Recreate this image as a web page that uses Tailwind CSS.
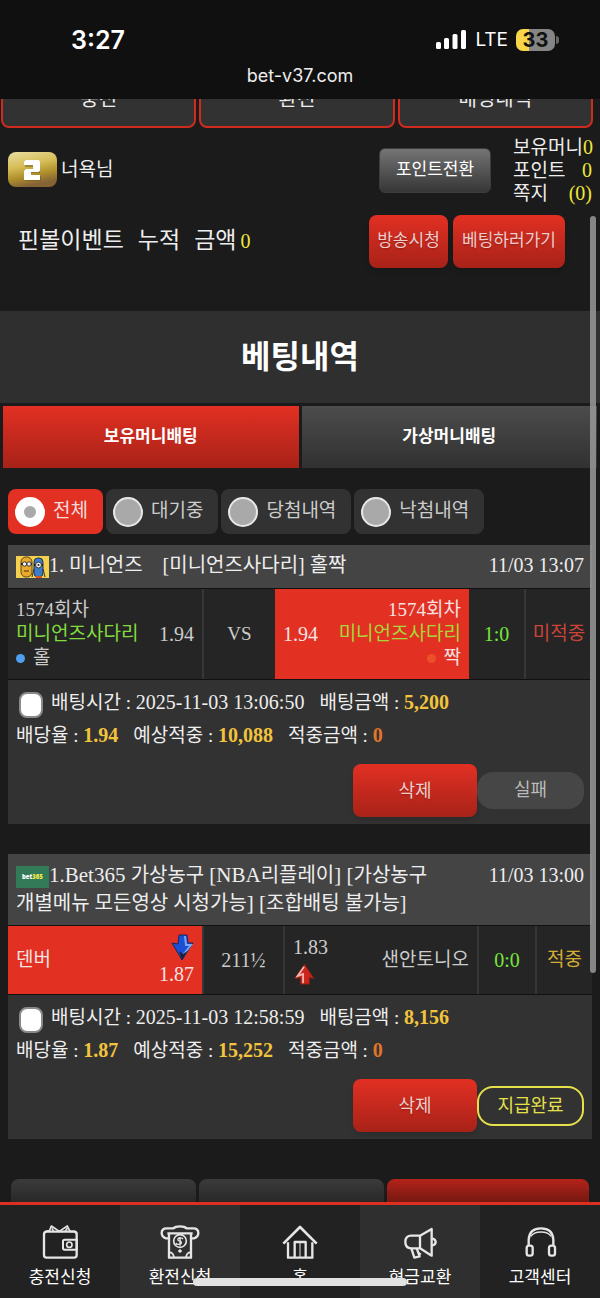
<!DOCTYPE html>
<html lang="ko">
<head>
	<meta charset="UTF-8">
	<meta name="viewport" content="width=device-width, initial-scale=1.0">
	<title>베팅내역</title>
	<script src="https://cdn.jsdelivr.net/npm/@tailwindcss/browser@4"></script>
</head>
<body class="bg-[#1b1b1b] text-[#eee] font-['Liberation_Serif','Noto_Sans_CJK_KR',serif]">
<div class="relative flex flex-col h-screen overflow-hidden">

	<!-- status bar -->
	<header class="h-[99px] shrink-0 bg-[#101010] text-white font-['Inter',sans-serif]">
		<div class="flex items-center justify-between h-16 pt-4 pl-[71px] pr-[41px]">
			<span class="text-[25px] leading-8 font-semibold">3:27</span>
			<div class="flex items-center gap-2">
				<svg class="w-[31px] h-5" viewBox="0 0 31 20" fill="#fff">
					<rect x="0" y="12" width="5" height="7" rx="1.5" />
					<rect x="8" y="8" width="5" height="11" rx="1.5" />
					<rect x="16.5" y="4" width="5" height="15" rx="1.5" />
					<rect x="25" y="0" width="5" height="19" rx="1.5" />
				</svg>
				<span class="text-[19px] leading-6">LTE</span>
				<div class="flex items-center gap-px">
					<span class="w-[39px] h-[22px] rounded-[7px] bg-linear-to-r from-[#f8d648] from-33% to-[#858585] to-33% text-[#111] text-[20px] leading-[22px] font-bold text-center">33</span>
					<span class="w-[3px] h-2 rounded-r-full bg-[#666]"></span>
				</div>
			</div>
		</div>
		<p class="text-center text-[18px] leading-6 text-[#eee]">bet-v37.com</p>
	</header>

	<main class="flex-1 min-h-0 overflow-hidden">
		<div class="flex items-end gap-[3px] h-[29px] overflow-hidden pl-px pr-[7px] text-[20px]">
			<button type="button" class="flex-1 h-[58px] shrink-0 rounded-lg border-2 border-[#cf2b1f] bg-[#323232]">충전</button>
			<button type="button" class="flex-1 h-[58px] shrink-0 rounded-lg border-2 border-[#cf2b1f] bg-[#323232]">환전</button>
			<button type="button" class="flex-1 h-[58px] shrink-0 rounded-lg border-2 border-[#cf2b1f] bg-[#323232]">배팅내역</button>
		</div>

		<!-- user info -->
		<section class="flex items-center h-[84px] pl-2 pr-2 text-[19px]">
			<svg class="w-[49px] h-[36px] shrink-0" viewBox="0 0 49 36">
				<defs>
					<linearGradient id="gold" x1="0" y1="0" x2="0.3" y2="1">
						<stop offset="0" stop-color="#e9dda4" />
						<stop offset="0.45" stop-color="#d6bd55" />
						<stop offset="0.75" stop-color="#ad8f2c" />
						<stop offset="1" stop-color="#856335" />
					</linearGradient>
				</defs>
				<rect width="49" height="35" rx="8" fill="url(#gold)" />
				<path d="M18 10h14v11h-9v3h10v5H17V18h9v-3h-9v-4z" fill="#6f571a" opacity="0.5" />
				<path d="M18 8h13l1 2v9l-2 1h-7v3h9v5H16v-9l2-2h7v-4h-9v-3z" fill="#fff" />
			</svg>
			<span class="pl-1">너욕님</span>
			<button type="button" class="ml-auto mr-[22px] w-[112px] h-[45px] rounded-md border border-[#3c3c3c] bg-linear-to-b from-[#757575] to-[#373737] text-[17px] text-white">포인트전환</button>
			<dl class="w-[79px] leading-[23px] whitespace-nowrap">
				<div class="flex justify-between"><dt>보유머니</dt><dd class="text-[20px] text-[#efe83c]">0</dd></div>
				<div class="flex justify-between"><dt>포인트</dt><dd class="text-[20px] text-[#efe83c]">0</dd></div>
				<div class="flex justify-between"><dt>쪽지</dt><dd class="text-[20px] text-[#efe83c]">(0)</dd></div>
			</dl>
		</section>

		<section class="flex items-center h-[99px] pl-[18px] pr-[35px] pb-[41px]">
			<p class="flex items-baseline gap-[14px] text-[23px] leading-8"><span>핀볼이벤트</span><span>누적</span><span>금액<span class="pl-1 text-[20px] text-[#efe83c]">0</span></span></p>
			<button type="button" class="ml-auto w-[79px] h-[53px] rounded-lg bg-linear-to-b from-[#e23023] to-[#a82218] text-[17px] text-[#eccfcd] shadow-md text-shadow-sm">방송시청</button>
			<button type="button" class="ml-[5px] w-[112px] h-[53px] rounded-lg bg-linear-to-b from-[#e23023] to-[#a82218] text-[17px] text-[#eccfcd] shadow-md text-shadow-sm">베팅하러가기</button>
		</section>

		<h1 class="flex items-center justify-center h-[92px] text-[32px] font-bold text-white bg-[#2f2f2f]">베팅내역</h1>

		<div class="flex gap-[3px] pt-[3px] px-[3px] text-[17px] font-bold text-white">
			<button type="button" class="flex-1 h-[62px] bg-linear-to-b from-[#e23023] to-[#a82218]">보유머니배팅</button>
			<button type="button" class="flex-1 h-[62px] bg-linear-to-b from-[#4c4c4c] to-[#313131]">가상머니배팅</button>
		</div>

		<!-- filters -->
		<div class="flex gap-[3px] pt-[21px] pl-2 text-[19px] text-[#ccc]">
			<label class="flex items-center gap-2 h-[45px] pl-[7px] pr-[15px] rounded-lg bg-[#e23023] text-[#f3dddb]">
				<input type="radio" name="filter" checked class="appearance-none w-[30px] h-[30px] rounded-full border-[9px] border-white bg-[#a9a9a9]">전체
			</label>
			<label class="flex items-center gap-2 h-[45px] pl-[7px] pr-[15px] rounded-lg bg-[#323232]">
				<input type="radio" name="filter" class="appearance-none w-[30px] h-[30px] rounded-full border-2 border-[#e8e8e8] bg-[#a9a9a9]">대기중
			</label>
			<label class="flex items-center gap-2 h-[45px] pl-[7px] pr-[15px] rounded-lg bg-[#323232]">
				<input type="radio" name="filter" class="appearance-none w-[30px] h-[30px] rounded-full border-2 border-[#e8e8e8] bg-[#a9a9a9]">당첨내역
			</label>
			<label class="flex items-center gap-2 h-[45px] pl-[7px] pr-[15px] rounded-lg bg-[#323232]">
				<input type="radio" name="filter" class="appearance-none w-[30px] h-[30px] rounded-full border-2 border-[#e8e8e8] bg-[#a9a9a9]">낙첨내역
			</label>
		</div>

		<!-- bet 1 -->
		<article class="mt-[11px] mx-2">
			<div class="flex justify-between bg-[#444] px-2 pt-[6px] pb-[9px] text-[20px] leading-7">
				<h2><svg class="inline-block w-[33px] h-[22px] align-[-6px]" viewBox="0 0 33 22">
					<rect width="33" height="22" fill="#f4d04e" />
					<rect x="5" y="1" width="11" height="20" rx="5" fill="#eaa928" stroke="#5b4a22" />
					<rect x="18" y="2" width="9" height="19" rx="4" fill="#3d7cc9" stroke="#26354d" />
					<path d="M5 8h11M18 9h9" stroke="#222" stroke-width="2" />
					<circle cx="8.5" cy="8" r="2.2" fill="#eee" stroke="#333" />
					<circle cx="13" cy="8" r="2.2" fill="#eee" stroke="#333" />
					<circle cx="22.5" cy="9" r="3" fill="#eee" stroke="#333" />
					<circle cx="22.5" cy="9" r="1" fill="#222" />
					<path d="M8 15h5M18 13l-2 8M27 13l2 8" stroke="#333" />
					<path d="M20 21h6" stroke="#d5542b" stroke-width="2" />
				</svg>1. 미니언즈 &nbsp; &nbsp;[미니언즈사다리] 홀짝</h2>
				<time class="shrink-0">11/03 13:07</time>
			</div>
			<div class="grid grid-cols-[1fr_73px_1fr_55px_68px] border-y border-[#111] bg-[#252525] text-[19px] leading-6 text-[#ccc]">
				<div class="flex items-center justify-between px-2 py-[9px]">
					<div><p>1574회차</p><p class="text-[#83dc3d]">미니언즈사다리</p><p class="flex items-center gap-2"><i class="w-[9px] h-[9px] rounded-full bg-[#4f9fee]"></i>홀</p></div>
					<span class="text-[20px]">1.94</span>
				</div>
				<div class="flex items-center justify-center border-l-2 border-[#363636]">VS</div>
				<div class="flex items-center justify-between px-2 py-[9px] bg-[#e23023] text-[#f5e3e1]">
					<span class="text-[20px]">1.94</span>
					<div class="text-right"><p>1574회차</p><p class="text-[#a6d838]">미니언즈사다리</p><p class="flex items-center justify-end gap-2"><i class="w-[9px] h-[9px] rounded-full bg-[#ec5028]"></i>짝</p></div>
				</div>
				<div class="flex items-center justify-center text-[20px] text-[#74e83b]">1:0</div>
				<div class="flex items-center justify-center border-l-2 border-[#363636] text-[#cc4438]">미적중</div>
			</div>
			<div class="bg-[#323232] px-2 pt-[6px] pb-[7px] text-[19px] leading-8">
				<p class="flex items-center"><input type="checkbox" aria-label="배팅 선택" class="appearance-none w-6 h-[26px] ml-[3px] mr-2 mt-1 rounded-lg border-2 border-[#8a8a8a] bg-white"><span class="mr-[15px]">배팅시간 : <span class="text-[20px]">2025-11-03 13:06:50</span></span><span>배팅금액 : <b class="text-[20px] text-[#f2c33c]">5,200</b></span></p>
				<p class="flex"><span class="mr-[15px]">배당율 : <b class="text-[20px] text-[#f2c33c]">1.94</b></span><span class="mr-[15px]">예상적중 : <b class="text-[20px] text-[#f2c33c]">10,088</b></span><span>적중금액 : <b class="text-[20px] text-[#e0762c]">0</b></span></p>
				<div class="flex items-center justify-end mt-3">
					<button type="button" class="w-[124px] h-[53px] rounded-lg bg-linear-to-b from-[#e23023] to-[#a82218] text-[18px] text-[#eccfcd] shadow-md text-shadow-sm">삭제</button>
					<span class="w-[107px] h-[37px] rounded-2xl bg-[#464646] text-[18px] leading-[37px] text-[#bbb] text-center">실패</span>
				</div>
			</div>
		</article>

		<!-- bet 2 -->
		<article class="mt-[30px] mx-2">
			<div class="flex justify-between bg-[#444] px-2 pt-[7px] pb-2 text-[20px] leading-7">
				<h2><svg class="inline-block w-[33px] h-[22px] align-[-6px] font-['Open_Sans',sans-serif]" viewBox="0 0 33 22">
					<rect width="33" height="22" fill="#337a58" />
					<text x="6" y="13" font-size="6" font-weight="800" fill="#fff">bet<tspan fill="#f2e84b">365</tspan></text>
				</svg><span class="text-[21px]">1.Bet365 </span>가상농구 <span class="text-[21px]">[NBA</span>리플레이<span class="text-[21px]">] [</span>가상농구<br>개별메뉴 모든영상 시청가능<span class="text-[21px]">] [</span>조합배팅 불가능]</h2>
				<time class="shrink-0">11/03 13:00</time>
			</div>
			<div class="grid grid-cols-[1fr_81px_1fr_58px_57px] h-[70px] border-y border-[#111] bg-[#252525] text-[19px] leading-6 text-[#ccc]">
				<div class="flex items-center justify-between px-2 bg-[#e23023] text-[#f5e3e1]">
					<span>덴버</span>
					<div class="flex flex-col items-end gap-px">
						<svg class="w-[23px] h-[27px]" viewBox="0 0 23 27">
							<path d="M8 1h8l1 8h5l-11 17L1 9l6 1z" fill="#1b50d4" stroke="#17285e" />
							<path d="M14 2l1 9h5l-8 10" fill="none" stroke="#7aa4f5" stroke-width="2" />
							<path d="M8 17l3 9 5-9-4 3z" fill="#1c2238" />
						</svg>
						<span class="text-[20px]">1.87</span>
					</div>
				</div>
				<div class="flex items-center justify-center border-l-2 border-[#363636] text-[20px]">211½</div>
				<div class="flex items-center justify-between px-2 border-l-2 border-[#363636]">
					<div class="flex flex-col items-start gap-1">
						<span class="text-[20px]">1.83</span>
						<svg class="w-[23px] h-[23px]" viewBox="0 0 23 25">
							<path d="M11.5 1L22 17l-5-1v7H7v-7l-6 1z" fill="#c9251a" stroke="#6b201b" />
							<path d="M11 4L4 14l6-2v10" fill="none" stroke="#f5b0aa" stroke-width="2" />
						</svg>
					</div>
					<span>샌안토니오</span>
				</div>
				<div class="flex items-center justify-center border-l-2 border-[#363636] text-[20px] text-[#74e83b]">0:0</div>
				<div class="flex items-center justify-center border-l-2 border-[#363636] text-[#d5ae35]">적중</div>
			</div>
			<div class="bg-[#323232] px-2 pt-[6px] pb-[7px] text-[19px] leading-8">
				<p class="flex items-center"><input type="checkbox" aria-label="배팅 선택" class="appearance-none w-6 h-[26px] ml-[3px] mr-2 mt-1 rounded-lg border-2 border-[#8a8a8a] bg-white"><span class="mr-[15px]">배팅시간 : <span class="text-[20px]">2025-11-03 12:58:59</span></span><span>배팅금액 : <b class="text-[20px] text-[#f2c33c]">8,156</b></span></p>
				<p class="flex"><span class="mr-[15px]">배당율 : <b class="text-[20px] text-[#f2c33c]">1.87</b></span><span class="mr-[15px]">예상적중 : <b class="text-[20px] text-[#f2c33c]">15,252</b></span><span>적중금액 : <b class="text-[20px] text-[#e0762c]">0</b></span></p>
				<div class="flex items-center justify-end mt-3">
					<button type="button" class="w-[124px] h-[53px] rounded-lg bg-linear-to-b from-[#e23023] to-[#a82218] text-[18px] text-[#eccfcd] shadow-md text-shadow-sm">삭제</button>
					<span class="w-[107px] h-10 rounded-2xl border-2 border-[#e6e04a] text-[18px] leading-9 text-[#e6e04a] text-center">지급완료</span>
				</div>
			</div>
		</article>

		<div class="flex gap-[3px] mt-10 px-[11px]">
			<button type="button" aria-label="전체선택" class="flex-1 h-12 rounded-t-lg bg-linear-to-b from-[#3b3b3b] to-[#161616]"></button>
			<button type="button" aria-label="선택삭제" class="flex-1 h-12 rounded-t-lg bg-linear-to-b from-[#3b3b3b] to-[#161616]"></button>
			<button type="button" aria-label="전체삭제" class="w-[202px] h-12 rounded-t-lg bg-linear-to-b from-[#b42319] to-[#3a0c08]"></button>
		</div>
	</main>

	<!-- bottom menu -->
	<nav class="grid grid-cols-5 h-24 shrink-0 border-t-3 border-[#dd3023] bg-[#222] text-[17px] leading-6 text-white">
		<a href="#" class="flex flex-col items-center pt-[18px]">
			<svg class="w-10 h-[37px] mb-[6px]" viewBox="0 0 120 111" fill="none" stroke="#e6e6e6" stroke-width="7" stroke-linejoin="round">
				<rect x="12" y="26" width="98" height="78" rx="8" />
				<path d="M14 28Q20 22 28 24L34 9l24 16L82 9l8 16h12q8 0 8 8M40 24l-4-8M76 24l6-8" stroke-width="5" />
				<path d="M110 50H74q-5 0-5 5v20q0 5 5 5h36z" stroke-width="6" />
				<circle cx="88" cy="65" r="8" stroke-width="5" />
			</svg>
			충전신청
		</a>
		<a href="#" class="flex flex-col items-center pt-[18px] bg-[#2f2f2f]">
			<svg class="w-10 h-[37px] mb-[6px]" viewBox="0 0 120 111" fill="none" stroke="#e6e6e6" stroke-width="7" stroke-linejoin="round">
				<path d="M28 46H18Q5 42 5 30Q5 16 20 16H40Q46 10 60 10T80 16H100Q115 16 115 30Q115 42 102 46H92" />
				<path d="M22 31H98M27 32V104H93V32" />
				<circle cx="60" cy="54" r="19" stroke-width="5" />
				<path d="M69 48q-4-5-11-3t-3 8q8 0 9 5t-7 6-9-4M60 42v26" stroke-width="4" />
				<path d="M28 88q12 0 14 15M92 88q-12 0-14 15M54 84h12M60 79v10" stroke-width="5" />
			</svg>
			환전신청
		</a>
		<a href="#" class="flex flex-col items-center pt-[18px]">
			<svg class="w-10 h-[37px] mb-[6px]" viewBox="0 0 120 111" fill="none" stroke="#e6e6e6" stroke-width="8" stroke-linejoin="round">
				<path d="M10 62L60 12l50 50" />
				<path d="M24 58v46h73V58M44 104V57h33v47" stroke-width="7" />
				<path d="M60 58v45" stroke-width="3" />
			</svg>
			홈
		</a>
		<a href="#" class="flex flex-col items-center pt-[18px] bg-[#2f2f2f]">
			<svg class="w-10 h-[37px] mb-[6px]" viewBox="0 0 120 111" fill="none" stroke="#e6e6e6" stroke-width="7" stroke-linejoin="round">
				<path d="M60 38L95 18V98L60 76H34Q16 76 16 57Q16 38 34 38z" />
				<path d="M60 38v38M96 46q11 3 11 11t-11 11M34 76l9 28 16-4-9-24" />
				<path d="M53 87l10 7" stroke-width="5" />
			</svg>
			현금교환
		</a>
		<a href="#" class="flex flex-col items-center pt-[18px]">
			<svg class="w-10 h-[37px] mb-[6px]" viewBox="0 0 120 111" fill="none" stroke="#e6e6e6" stroke-width="7" stroke-linejoin="round">
				<path d="M26 68V50Q28 16 63 16T100 50V68" />
				<path d="M33 40Q40 27 63 27T93 40" stroke-width="4" />
				<rect x="20" y="68" width="18" height="30" rx="7" />
				<rect x="87" y="68" width="18" height="30" rx="7" />
			</svg>
			고객센터
		</a>
	</nav>

	<!-- overlays: scroll thumb and home indicator -->
	<div class="absolute right-1 top-[216px] w-[6px] h-[757px] rounded-full bg-[#999]/85"></div>
	<div class="absolute left-1/2 bottom-3 w-[214px] h-2 -translate-x-1/2 rounded-full bg-[#e2e2e2]"></div>
</div>
</body>
</html>
